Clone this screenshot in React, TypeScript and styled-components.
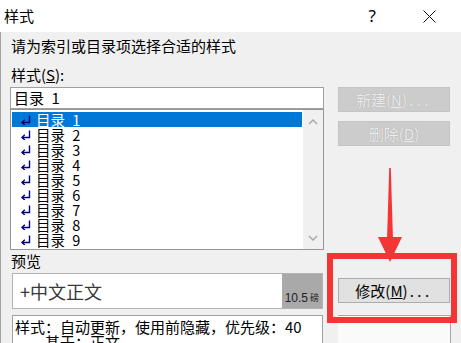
import React from "react";
import styled, { createGlobalStyle } from "styled-components";

const GlobalStyle = createGlobalStyle`
  html, body { margin: 0; padding: 0; background: #f0f0f0; }
  body { font-family: "Noto Sans CJK SC", sans-serif; }
`;

const Dialog = styled.div`
  position: relative;
  width: 461px;
  height: 343px;
  overflow: hidden;
  display: flex;
  flex-direction: column;
  background: #f0f0f0;
  font-family: "Noto Sans CJK SC", sans-serif;
  font-size: 15px;
  color: #000;
`;

const TitleBar = styled.div`
  height: 32px;
  flex: none;
  background: #fff;
  display: flex;
  align-items: center;
`;

const Title = styled.div`
  flex: 1;
  padding-left: 4px;
  font-size: 15px;
  line-height: 16px;
`;

const HelpMark = styled.div`
  font-family: "Noto Sans", sans-serif;
  font-size: 17px;
  line-height: 16px;
  margin-right: 47px;
`;

const CloseIcon = styled.svg`
  width: 13px;
  height: 13px;
  margin-right: 25px;
`;

const Body = styled.div`
  flex: 1;
  display: flex;
  border-left: 1px solid #a3a3a3;
  padding-top: 6px;
  min-height: 0;
`;

const LeftColumn = styled.div`
  margin-left: 9px;
  width: 314px;
  display: flex;
  flex-direction: column;
`;

const TextLine = styled.div<{ $top?: number }>`
  height: 16px;
  line-height: 16px;
  padding-left: 1px;
  margin-top: ${(p) => p.$top ?? 0}px;
  white-space: nowrap;
`;

const StyleInput = styled.div`
  margin-top: 4px;
  height: 22px;
  box-sizing: border-box;
  border: 1px solid #a0a0a0;
  background: #fff;
  padding-left: 3px;
  line-height: 20px;
  white-space: nowrap;
`;

const StyleList = styled.div`
  height: 141px;
  box-sizing: border-box;
  border: 1px solid #969696;
  background: #fff;
  display: flex;
`;

const Items = styled.div`
  flex: 1;
  padding: 2px 0 2px 1px;
`;

const Row = styled.div<{ $selected?: boolean }>`
  height: 15px;
  display: flex;
  align-items: center;
  padding-left: 8px;
  background: ${(p) => (p.$selected ? "#0078d7" : "transparent")};
  color: ${(p) => (p.$selected ? "#fff" : "#000")};
  font-size: 14.5px;
  line-height: 15px;
  white-space: nowrap;
`;

const ReturnMark = styled.svg`
  width: 11px;
  height: 11px;
  margin-right: 5px;
  flex: none;
`;

const ScrollBar = styled.div`
  width: 20px;
  margin-left: 1px;
  background: #f0f0f0;
  display: flex;
  flex-direction: column;
  justify-content: space-between;
  align-items: center;
  padding: 9px 0 8px;
`;

const Chevron = styled.svg`
  width: 10px;
  height: 6px;
`;

const PreviewBox = styled.div`
  margin-top: 4px;
  margin-left: 2px;
  width: 311px;
  height: 36px;
  box-sizing: border-box;
  border: 1px solid #b4b4b4;
  display: flex;
`;

const PreviewText = styled.div`
  flex: 1;
  background: #fff;
  display: flex;
  align-items: center;
  padding-left: 7px;
  font-size: 18px;
  color: #383838;
  white-space: nowrap;
`;

const PreviewSize = styled.div`
  width: 40px;
  background: #a9a9a9;
  display: flex;
  align-items: flex-end;
  justify-content: flex-end;
  padding: 0 3px 4px 0;
  box-sizing: border-box;
  font-family: "Liberation Sans", "Noto Sans CJK SC", sans-serif;
  font-size: 12px;
  line-height: 12px;
  color: #222;
  white-space: nowrap;
`;

const SizeUnit = styled.span`
  font-size: 9px;
  margin-left: 2px;
`;

const Description = styled.div`
  margin-top: 6px;
  margin-left: 2px;
  width: 311px;
  flex: 1;
  box-sizing: border-box;
  border: 1px solid #a0a0a0;
  border-bottom: none;
  background: #fff;
  padding: 3px 0 0 2px;
  line-height: 15px;
  white-space: nowrap;
  overflow: hidden;
`;

const Indent = styled.div`
  padding-left: 30px;
`;

const RightColumn = styled.div`
  margin-left: 14px;
  width: 113px;
  display: flex;
  flex-direction: column;
`;

const Button = styled.div<{ $top: number; $disabled?: boolean }>`
  margin-top: ${(p) => p.$top}px;
  width: 112px;
  height: 25px;
  box-sizing: border-box;
  border: 1px solid ${(p) => (p.$disabled ? "#c4c4c4" : "#adadad")};
  background: ${(p) => (p.$disabled ? "#cccccc" : "#e1e1e1")};
  color: ${(p) => (p.$disabled ? "#ececec" : "#000")};
  text-shadow: ${(p) => (p.$disabled ? "0 0 1px #9a9a9a" : "none")};
  display: flex;
  align-items: center;
  justify-content: center;
  font-size: 15px;
  line-height: 15px;
  white-space: nowrap;
`;

const Dots = styled.span`
  letter-spacing: 3.5px;
  margin-left: 2px;
`;

const LowerBox = styled.div`
  margin-top: 12px;
  flex: 1;
  box-sizing: border-box;
  border-top: 1px solid #a8a8a8;
  border-right: 1px solid #a8a8a8;
  background: #fafafa;
`;

const Overlay = styled.svg`
  position: absolute;
  left: 0;
  top: 0;
  width: 461px;
  height: 343px;
  pointer-events: none;
`;

const items = [1, 2, 3, 4, 5, 6, 7, 8, 9];

const Return = () => (
  <ReturnMark viewBox="0 0 11 11">
    <path d="M9.5 1.5 V8.5 H2" stroke="#00007a" strokeWidth="1.4" fill="none" />
    <path d="M4.8 5.8 L2 8.5 L4.8 11" stroke="#00007a" strokeWidth="1.4" fill="none" />
  </ReturnMark>
);

export default function App() {
  return (
    <>
      <GlobalStyle />
      <Dialog>
        <TitleBar>
          <Title>样式</Title>
          <HelpMark>?</HelpMark>
          <CloseIcon viewBox="0 0 13 13">
            <path d="M0.5 0.5 L12.5 12.5 M12.5 0.5 L0.5 12.5" stroke="#111" strokeWidth="1" />
          </CloseIcon>
        </TitleBar>
        <Body>
          <LeftColumn>
            <TextLine>请为索引或目录项选择合适的样式</TextLine>
            <TextLine $top={13}>
              样式(<u>S</u>):
            </TextLine>
            <StyleInput>目录{"\u2002"}1</StyleInput>
            <StyleList>
              <Items>
                {items.map((n) => (
                  <Row key={n} $selected={n === 1}>
                    <Return />
                    目录{"\u2002"}{n}
                  </Row>
                ))}
              </Items>
              <ScrollBar>
                <Chevron viewBox="0 0 10 6">
                  <path d="M1 5 L5 1 L9 5" stroke="#a6a6a6" strokeWidth="1.4" fill="none" />
                </Chevron>
                <Chevron viewBox="0 0 10 6">
                  <path d="M1 1 L5 5 L9 1" stroke="#a6a6a6" strokeWidth="1.4" fill="none" />
                </Chevron>
              </ScrollBar>
            </StyleList>
            <TextLine $top={3}>预览</TextLine>
            <PreviewBox>
              <PreviewText>+中文正文</PreviewText>
              <PreviewSize>
                10.5<SizeUnit>磅</SizeUnit>
              </PreviewSize>
            </PreviewBox>
            <Description>
              <div>样式：自动更新，使用前隐藏，优先级：40</div>
              <Indent>基于：正文</Indent>
            </Description>
          </LeftColumn>
          <RightColumn>
            <Button $top={49} $disabled>
              新建(<u>N</u>)<Dots>...</Dots>
            </Button>
            <Button $top={9} $disabled>
              删除(<u>D</u>)
            </Button>
            <Button $top={132}>
              修改(<u>M</u>)<Dots>...</Dots>
            </Button>
            <LowerBox />
          </RightColumn>
        </Body>
        <Overlay viewBox="0 0 461 343">
          <polygon points="389.2,168 390.8,168 393,240 387,240" fill="#f53535" />
          <polygon points="378,237 402,237 390,262" fill="#f53535" />
          <rect x="330" y="256" width="124" height="64" fill="none" stroke="#f53535" strokeWidth="6" />
        </Overlay>
      </Dialog>
    </>
  );
}
